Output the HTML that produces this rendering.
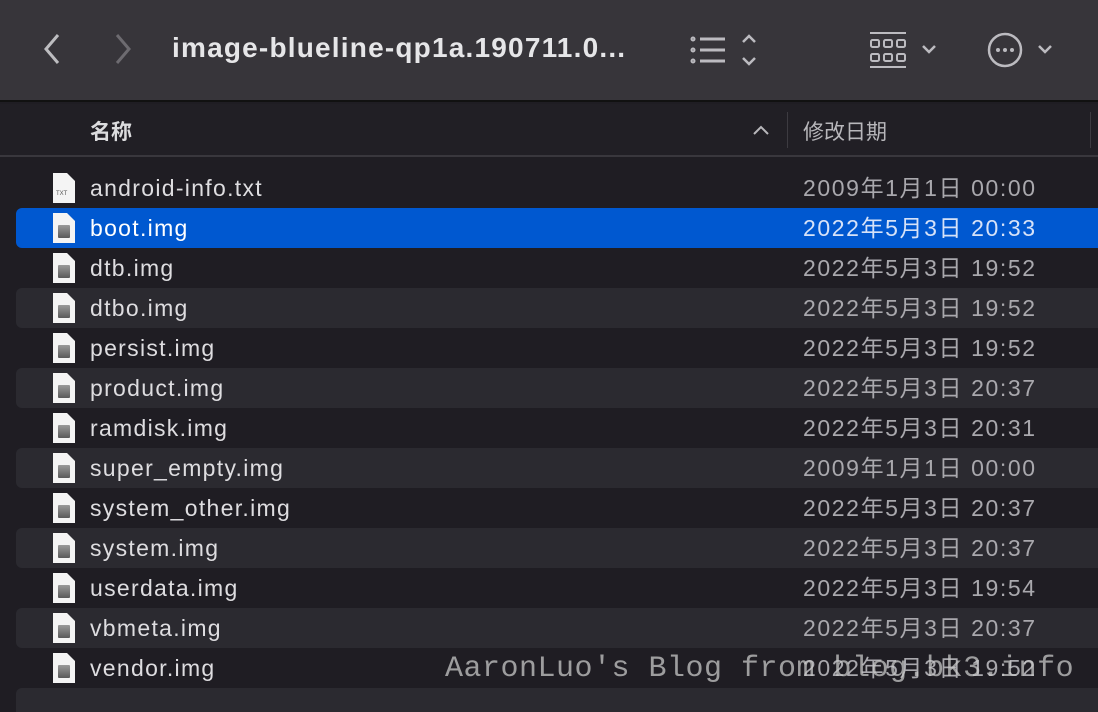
<!DOCTYPE html>
<html><head><meta charset="utf-8"><style>
*{margin:0;padding:0;box-sizing:border-box}
html,body{width:1098px;height:712px;overflow:hidden}
body{background:#1f1d23;position:relative;font-family:"Liberation Sans","Noto Sans CJK SC",sans-serif;}
.tb{position:absolute;left:0;top:0;width:1098px;height:102px;background:#37353a;border-bottom:2px solid #111;}
.title{position:absolute;left:172px;top:32px;font-size:28px;font-weight:bold;color:#e6e6e8;letter-spacing:1.2px}
.hdr{position:absolute;left:0;top:104px;width:1098px;height:53px;background:#211f25;border-bottom:2px solid #39373d;}
.hdr .n{position:absolute;left:90px;top:12px;font-size:21px;font-weight:bold;color:#dcdcde}
.hdr .d{position:absolute;left:803px;top:12px;font-size:21px;color:#b8b7bb}
.hdr .sep{position:absolute;left:787px;top:8px;width:1px;height:36px;background:#3d3b41}
.hdr .sep2{position:absolute;left:1090px;top:8px;width:1px;height:36px;background:#3d3b41}
.row{position:absolute;left:16px;width:1082px;height:40px;border-radius:6px 0 0 6px}
.st{background:#2b2a30}
.sel{background:#0058d0}
.nm{position:absolute;left:90px;font-size:23px;color:#dedde0;line-height:40px;letter-spacing:1.3px}
.dt{position:absolute;left:803px;font-size:23px;color:#a9a8ad;line-height:40px;letter-spacing:1.6px}
.sl{color:#fff}.sld{color:#d6e2f8}
.ic{position:absolute;left:53px;width:22px;height:30px;background:#f4f4f4;clip-path:polygon(0 0,14px 0,22px 8px,22px 30px,0 30px)}
.ic i{position:absolute;left:5px;top:12px;width:12px;height:13px;background:linear-gradient(#9a9a9a,#5a5a5a);border-radius:1px}
.ic b{position:absolute;left:3px;top:18px;font-size:6px;color:#555;font-weight:normal}
.wm{position:absolute;left:445px;top:652px;font-family:"Liberation Mono",monospace;font-size:30px;color:rgba(200,200,200,0.75);letter-spacing:0.5px;white-space:pre}
</style></head><body>
<div class="tb">
<svg style="position:absolute;left:38px;top:30px" width="30" height="40"><path d="M20 5 L8 19 L20 33" stroke="#bdbdc0" stroke-width="3" fill="none"/></svg>
<svg style="position:absolute;left:108px;top:30px" width="30" height="40"><path d="M9 5 L21 19 L9 33" stroke="#6d6b70" stroke-width="3" fill="none"/></svg>
<div class="title">image-blueline-qp1a.190711.0...</div>
<svg style="position:absolute;left:688px;top:32px" width="75" height="36"><g stroke="#bcbbc0" stroke-width="3" fill="none"><circle cx="5" cy="7" r="1" /><circle cx="5" cy="18" r="1"/><circle cx="5" cy="29" r="1"/><path d="M12 7H37M12 18H37M12 29H37"/><path d="M55 10l6-6 6 6M55 26l6 6 6-6" stroke-width="2.5"/></g></svg>
<svg style="position:absolute;left:866px;top:30px" width="80" height="40"><g fill="none" stroke="#bcbbc0" stroke-width="2"><path d="M4 3H40M4 37H40"/><rect x="5" y="10" width="8" height="7" rx="1.5"/><rect x="18" y="10" width="8" height="7" rx="1.5"/><rect x="31" y="10" width="8" height="7" rx="1.5"/><rect x="5" y="24" width="8" height="7" rx="1.5"/><rect x="18" y="24" width="8" height="7" rx="1.5"/><rect x="31" y="24" width="8" height="7" rx="1.5"/><path d="M57 16l6 6 6-6" stroke-width="2.5"/></g></svg>
<svg style="position:absolute;left:985px;top:30px" width="75" height="40"><g fill="none" stroke="#bcbbc0" stroke-width="2.5"><circle cx="20" cy="20" r="16"/><path d="M54 16l6 6 6-6"/></g><g fill="#bcbbc0"><circle cx="13" cy="20" r="2"/><circle cx="20" cy="20" r="2"/><circle cx="27" cy="20" r="2"/></g></svg>
</div>
<div class="hdr"><div class="n">名称</div>
<svg style="position:absolute;left:752px;top:20px" width="18" height="14"><path d="M2 10l7-7 7 7" stroke="#b8b7bb" stroke-width="2" fill="none"/></svg>
<div class="sep"></div><div class="d">修改日期</div><div class="sep2"></div></div>

<div class="row sel" style="top:208px"></div>
<div class="row st" style="top:288px"></div>
<div class="row st" style="top:368px"></div>
<div class="row st" style="top:448px"></div>
<div class="row st" style="top:528px"></div>
<div class="row st" style="top:608px"></div>
<div class="row st" style="top:688px"></div>

<div class="ic" style="top:173px"><b>TXT</b></div><div class="nm" style="top:168px">android-info.txt</div><div class="dt" style="top:168px">2009年1月1日 00:00</div>
<div class="ic" style="top:213px"><i></i></div><div class="nm sl" style="top:208px">boot.img</div><div class="dt sld" style="top:208px">2022年5月3日 20:33</div>
<div class="ic" style="top:253px"><i></i></div><div class="nm" style="top:248px">dtb.img</div><div class="dt" style="top:248px">2022年5月3日 19:52</div>
<div class="ic" style="top:293px"><i></i></div><div class="nm" style="top:288px">dtbo.img</div><div class="dt" style="top:288px">2022年5月3日 19:52</div>
<div class="ic" style="top:333px"><i></i></div><div class="nm" style="top:328px">persist.img</div><div class="dt" style="top:328px">2022年5月3日 19:52</div>
<div class="ic" style="top:373px"><i></i></div><div class="nm" style="top:368px">product.img</div><div class="dt" style="top:368px">2022年5月3日 20:37</div>
<div class="ic" style="top:413px"><i></i></div><div class="nm" style="top:408px">ramdisk.img</div><div class="dt" style="top:408px">2022年5月3日 20:31</div>
<div class="ic" style="top:453px"><i></i></div><div class="nm" style="top:448px">super_empty.img</div><div class="dt" style="top:448px">2009年1月1日 00:00</div>
<div class="ic" style="top:493px"><i></i></div><div class="nm" style="top:488px">system_other.img</div><div class="dt" style="top:488px">2022年5月3日 20:37</div>
<div class="ic" style="top:533px"><i></i></div><div class="nm" style="top:528px">system.img</div><div class="dt" style="top:528px">2022年5月3日 20:37</div>
<div class="ic" style="top:573px"><i></i></div><div class="nm" style="top:568px">userdata.img</div><div class="dt" style="top:568px">2022年5月3日 19:54</div>
<div class="ic" style="top:613px"><i></i></div><div class="nm" style="top:608px">vbmeta.img</div><div class="dt" style="top:608px">2022年5月3日 20:37</div>
<div class="ic" style="top:653px"><i></i></div><div class="nm" style="top:648px">vendor.img</div><div class="dt" style="top:648px">2022年5月3日 19:52</div>
<div class="wm">AaronLuo's Blog from blog.bk3.info</div>
</body></html>
